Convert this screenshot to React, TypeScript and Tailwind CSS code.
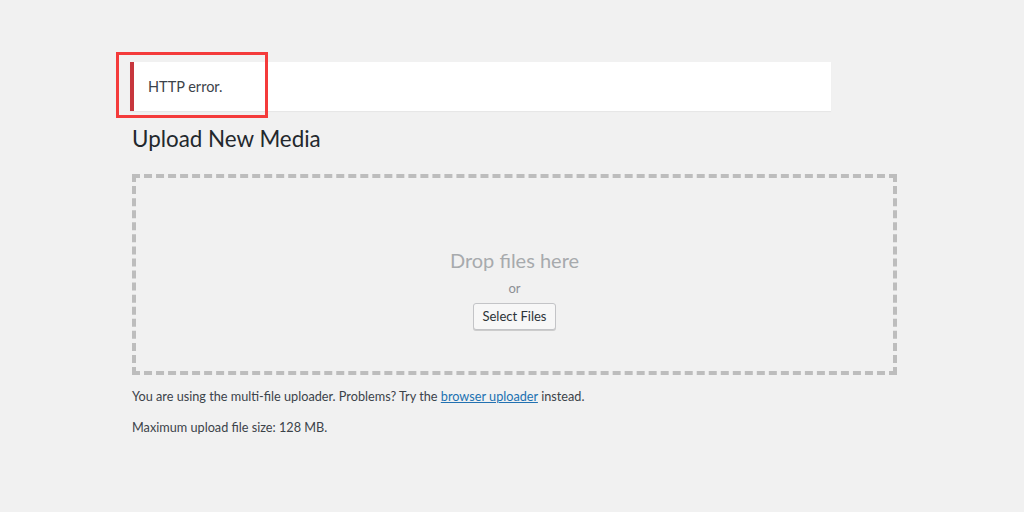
import React from "react";

export default function App() {
  return (
    <div
      className="relative w-[1024px] h-[512px] overflow-hidden bg-[#f1f1f1] text-[#3c434a]"
      style={{ fontFamily: 'Lato, "Open Sans", "Liberation Sans", sans-serif' }}
    >
      <div className="pt-[62px] pl-[130px]">
        <div className="w-[701px] h-[49px] bg-white border-l-4 border-[#c7363d] shadow-[0_1px_1px_rgba(0,0,0,0.04)] flex items-center pl-[14px]">
          <p className="text-[14.5px] leading-[18px] text-[#3c434a]">HTTP error.</p>
        </div>
        <h1 className="mt-[13px] pl-[2px] text-[22.4px] leading-[29px] font-normal text-[#23282d]">
          Upload New Media
        </h1>
        <div className="mt-[21px] ml-[2px] w-[765px] h-[201px] border-4 border-dashed border-[#bdbdbd] flex flex-col items-center pt-[68px]">
          <p className="text-[20px] leading-[28px] text-[#a7aaad]">Drop files here</p>
          <p className="mt-[5px] text-[13px] leading-[18px] text-[#8c8f94]">or</p>
          <button className="mt-[6px] h-[27px] px-[8px] rounded-[3px] border border-[#c3c4c7] bg-[#f7f7f7] text-[13px] leading-[25px] text-[#2c3338] shadow-[0_1px_0_#ccc]">
            Select Files
          </button>
        </div>
        <p className="mt-[12px] pl-[2px] text-[12.7px] leading-[18px] text-[#3c434a]">
          You are using the multi-file uploader. Problems? Try the{" "}
          <a className="text-[#2271b1] underline">browser uploader</a> instead.
        </p>
        <p className="mt-[13px] pl-[2px] text-[12.7px] leading-[18px] text-[#3c434a]">
          Maximum upload file size: 128 MB.
        </p>
      </div>
      <div className="absolute left-[116px] top-[52px] w-[152px] h-[66px] border-[3px] border-[#f43b3b]" />
    </div>
  );
}
